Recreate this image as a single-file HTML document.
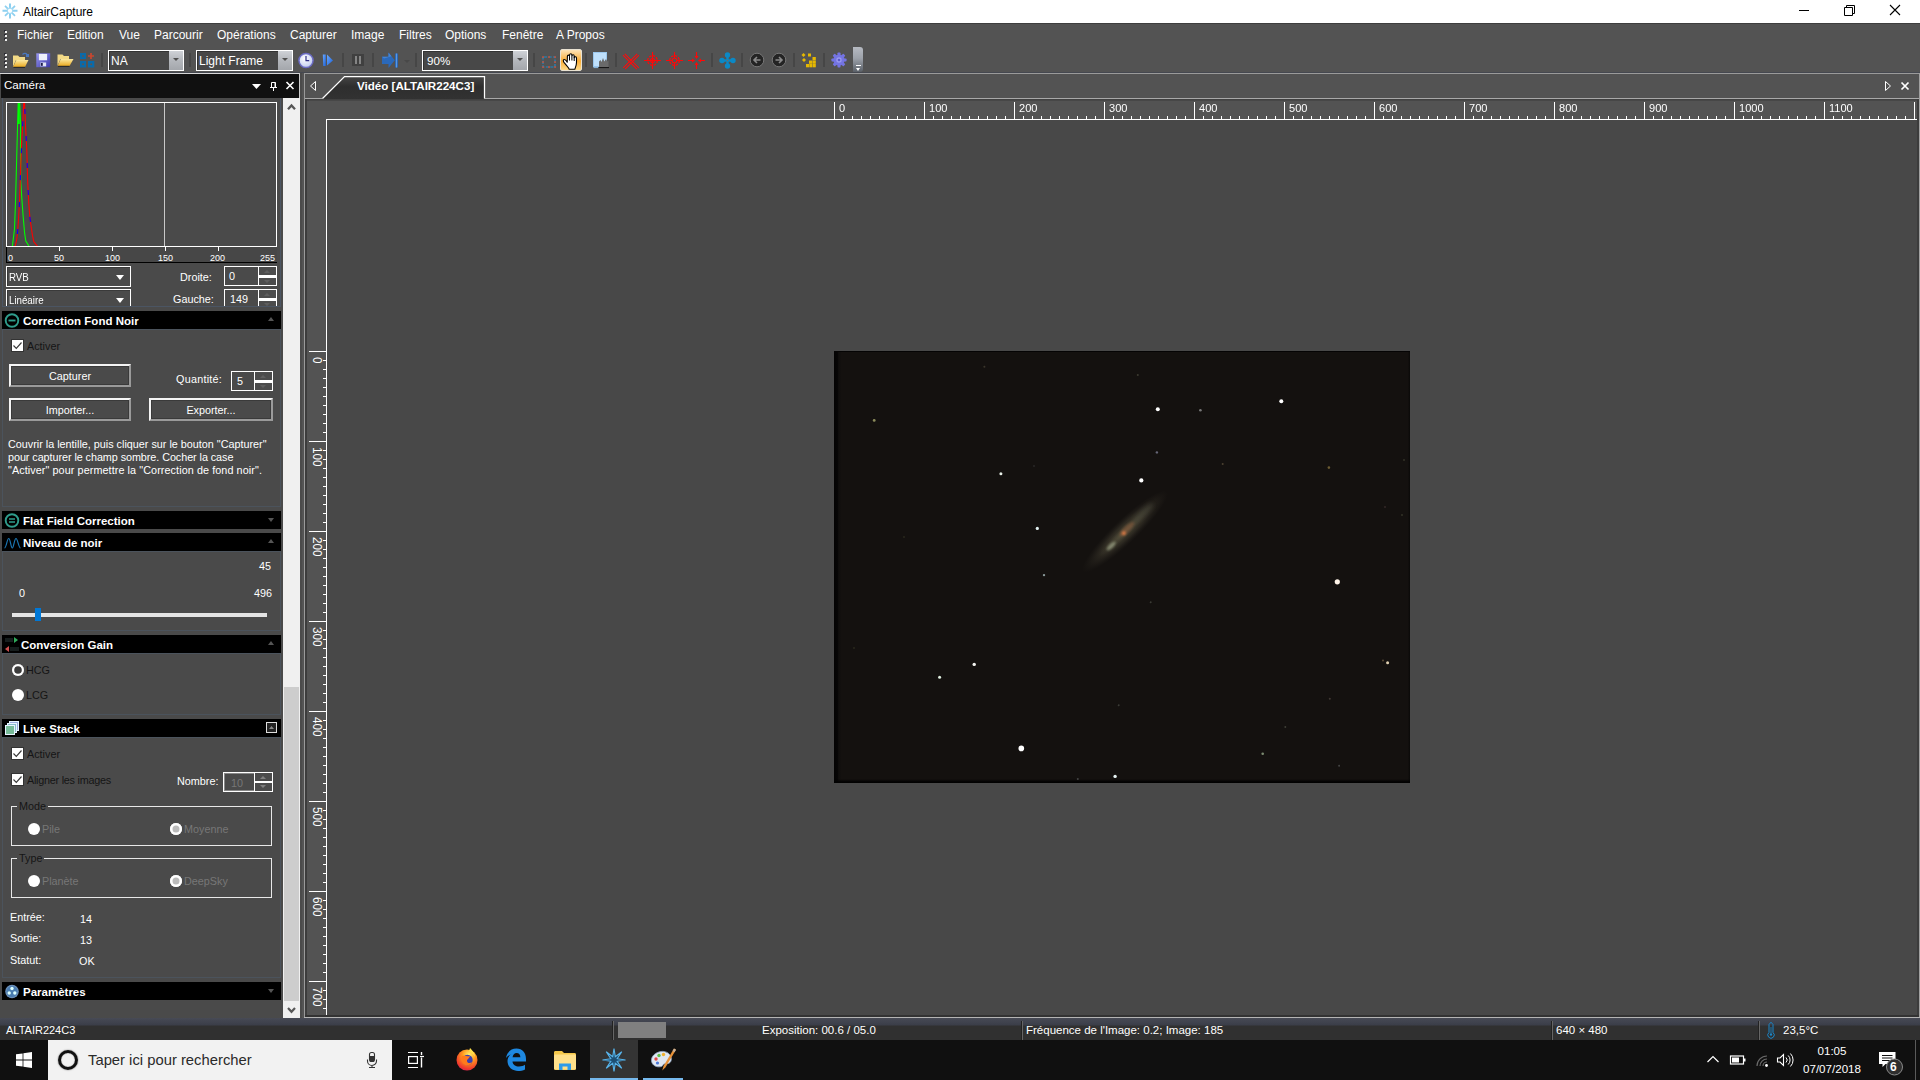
<!DOCTYPE html>
<html lang="fr">
<head>
<meta charset="utf-8">
<title>AltairCapture</title>
<style>
*{box-sizing:border-box;margin:0;padding:0}
html,body{width:1920px;height:1080px;overflow:hidden;background:#535353}
body{font-family:"Liberation Sans",sans-serif;font-size:12px;color:#fff;position:relative}
.a{position:absolute}
.t{position:absolute;white-space:pre;line-height:14px}
/* title bar */
#title{left:0;top:0;width:1920px;height:23px;background:#fff;color:#000}
/* menu + toolbar */
#menubar{left:0;top:23px;width:1920px;height:24px;background:#535353;border-top:1px solid #3e3e3e}
#toolbar{left:0;top:47px;width:1920px;height:26px;background:#535353}
.grip{width:2px;height:2px;background:#f0f0f0;box-shadow:-1px -1px 0 #2c2c34;margin:1px 0 0 0}
.m{top:4px;font-size:12px;color:#fff}
.sep{width:2px;height:14px;background:#464646;top:6px}
.combo{border:1px solid #fff;background:#484848;height:21px;top:3px;box-shadow:inset 1px 1px 0 #333}
.combo .btn{position:absolute;right:0;top:0;bottom:0;width:14px;background:linear-gradient(#cfd2d7,#b4b7bc 50%,#a4a7ac)}
.combo .btn:after{content:"";position:absolute;left:4px;top:7px;border:3px solid transparent;border-top:3px solid #505050;border-bottom:0}
.combo .t{left:2px;top:3px;font-size:12px}
/* left panel */
#left{left:0;top:73px;width:302px;height:945px;background:#4a4a4a}
.hdr{left:2px;width:279px;height:18px;background:#000;font-weight:bold;font-size:11.5px}
.hdr .t{left:21px;top:3px}
.sec{left:2px;width:279px;border:1px solid #4b535c;background:#4a4a4a}
.s{font-size:10.8px;line-height:13px}
.btn3{border:2px solid;border-color:#f4f4f4 #9a9a9a #9a9a9a #f4f4f4;background:#4a4a4a;text-align:center;font-size:10.8px;line-height:21px;height:23px;box-shadow:inset 0 0 0 1px #3a3a3a}
.cb{width:13px;height:13px;background:#fff;border:1px solid #333}
.rad{width:12px;height:12px;margin:.5px;border-radius:50%;background:#fff}
.spin{border:1px solid #fff;background:#4a4a4a;height:20px;overflow:hidden}
.ax{top:252.5px;font-size:9px;line-height:11px;color:#fff}
.lcombo{width:125px;height:21px;border:1px solid #fff;background:#4a4a4a;box-shadow:inset 1px 1px 0 #3a3a3a}
.lcombo .t{left:2px;top:4px;transform-origin:0 0;transform:scaleX(.9)}
.lcombo i{position:absolute;left:109px;top:8px;border:4.5px solid transparent;border-top:5px solid #fff;border-bottom:0}
.spin b{position:absolute;right:0;top:0;width:18px;bottom:0;border-left:1px solid #fff;background:linear-gradient(#4c4c4c 0,#4c4c4c 8px,#fff 8px,#fff 11px,#4c4c4c 11px)}
.spin b:before{content:"";position:absolute;left:5px;top:3px;border:3px solid transparent;border-bottom:3px solid #5e5e5e;border-top:0}
.spin b:after{content:"";position:absolute;left:5px;top:13px;border:3px solid transparent;border-top:3px solid #5e5e5e;border-bottom:0}
.dk{color:#151515}.gy{color:#777}
.hdr u{position:absolute;left:266px;border:3.5px solid transparent}
.hdr u.up{top:6px;border-bottom:4px solid #555;border-top:0}
.hdr u.dn{top:7px;border-top:4px solid #555;border-bottom:0}
.grp{left:11px;width:261px;height:40px;border:1px solid #e8e8e8}
.cb svg{display:block}
.spin b.lt:before{border-bottom-color:#808080}.spin b.lt:after{border-top-color:#808080;top:12px}
/* main */
#main{left:304px;top:74px;width:1616px;height:944px;background:#535353}
.rl{top:102px;font-size:11.5px;line-height:13px;transform-origin:0 0;transform:scaleX(.96)}
.vl{left:323px;font-size:12px;line-height:13px;transform-origin:0 0;transform:rotate(90deg) scaleX(.98)}
/* status */
#status{left:0;top:1018px;width:1920px;height:22px;background:linear-gradient(#474a55 0,#3b3e49 7px,#303030 8px,#303030 100%)}
.st{top:1023px;font-size:11.5px;line-height:14px}
.vs{top:1021px;width:2px;height:19px;background:linear-gradient(90deg,#222 50%,#666 50%)}
#task{left:0;top:1040px;width:1920px;height:40px;background:#101010}
</style>
</head>
<body>
<!-- TITLE BAR -->
<div id="title" class="a">
  <svg class="a" style="left:0;top:0" width="21" height="23" viewBox="0 0 21 23"><g stroke="#8dd0f0" fill="none"><path d="M10 3.500v15M2.500 10.800h15" stroke-width="2"/><path d="M5 5.800l10 10M15 5.800l-10 10" stroke-width="1.700"/></g><circle cx="10" cy="10.800" r="2.700" fill="#fff" stroke="#a6dbf4" stroke-width="1.100"/></svg>
  <span class="t" style="left:23px;top:5px;font-size:12px">AltairCapture</span>
  <svg class="a" style="left:1790px;top:0" width="130" height="23" viewBox="0 0 130 23"><path d="M9 10.500h10" stroke="#000" stroke-width="1"/><path d="M54.500 7.500h8v8h-8zM56.500 7.500v-2h8v8h-2" fill="none" stroke="#000" stroke-width="1"/><path d="M100 5l10 10M110 5l-10 10" stroke="#000" stroke-width="1.100"/></svg>
</div>
<!-- MENU BAR -->
<div id="menubar" class="a">
  <div class="a grip" style="left:5px;top:6px"></div><div class="a grip" style="left:5px;top:10px"></div><div class="a grip" style="left:5px;top:14px"></div>
  <span class="t m" style="left:17px">Fichier</span>
  <span class="t m" style="left:67px">Edition</span>
  <span class="t m" style="left:119px">Vue</span>
  <span class="t m" style="left:154px">Parcourir</span>
  <span class="t m" style="left:217px">Opérations</span>
  <span class="t m" style="left:290px">Capturer</span>
  <span class="t m" style="left:351px">Image</span>
  <span class="t m" style="left:399px">Filtres</span>
  <span class="t m" style="left:445px">Options</span>
  <span class="t m" style="left:502px">Fenêtre</span>
  <span class="t m" style="left:556px">A Propos</span>
</div>
<!-- TOOLBAR -->
<div id="toolbar" class="a">
  <div class="a grip" style="left:5px;top:6px"></div><div class="a grip" style="left:5px;top:10px"></div><div class="a grip" style="left:5px;top:14px"></div><div class="a grip" style="left:5px;top:18px"></div>
  <!-- open folder w/ arrow -->
  <svg class="a ic" style="left:12px;top:5px" width="18" height="17" viewBox="0 0 18 17"><defs><linearGradient id="fo" x1="0" y1="0" x2="0" y2="1"><stop offset="0" stop-color="#fbe9a0"/><stop offset="1" stop-color="#e9a91f"/></linearGradient></defs><path d="M1 3.500h5l1.500 1.500H13v3H4L1 14.500z" fill="#f3da86"/><path d="M4.300 8h12.200L13 15H1z" fill="url(#fo)"/><path d="M1.500 15.300H13" stroke="#222" stroke-width="1"/><path d="M10.500 2.500c1.500-1.500 3.500-1.500 4.500 0" fill="none" stroke="#4a78c0" stroke-width="1.200"/><rect x="14" y="2" width="3" height="3" fill="#4a78c0"/></svg>
  <!-- floppy -->
  <svg class="a ic" style="left:36px;top:6px" width="14.500" height="14.500" viewBox="0 0 15 15"><defs><linearGradient id="fl" x1="0" y1="0" x2="1" y2="1"><stop offset="0" stop-color="#9a98f0"/><stop offset="1" stop-color="#3a38a8"/></linearGradient></defs><rect x=".3" y=".3" width="14.400" height="14.400" fill="url(#fl)"/><rect x="3" y="1" width="8.500" height="6.500" fill="#eef0fa"/><rect x="4.500" y="9.800" width="6" height="4" fill="#dfe3f3"/><rect x="5" y="10.300" width="2" height="3" fill="#1c1c50"/></svg>
  <!-- folder -->
  <svg class="a ic" style="left:57px;top:6px" width="17" height="15" viewBox="0 0 17 15"><path d="M.500 1.500h5l1.500 1.500H12v3H3.500L.500 12.500z" fill="#f3da86"/><path d="M3.800 6h12.700L12.500 13H.500z" fill="url(#fo)"/><path d="M1 13.300H12.500" stroke="#222" stroke-width="1"/></svg>
  <!-- blue squares + plus -->
  <svg class="a ic" style="left:80px;top:6px" width="15" height="15" viewBox="0 0 15 15"><g fill="#0b6aa9"><rect x="0" y="0" width="6" height="6"/><rect x="0" y="8" width="6" height="6.500"/><rect x="8" y="8" width="6.300" height="6.500"/></g><g fill="#70523f"><rect x="2.300" y="2.300" width="1.500" height="1.500"/><rect x="2.300" y="10.500" width="1.500" height="1.500"/><rect x="10.400" y="10.500" width="1.500" height="1.500"/></g><path d="M11 0v6M8 3h6" stroke="#c9472f" stroke-width="1.700"/></svg>
  <div class="a sep" style="left:101px"></div>
  <div class="a combo" style="left:108px;width:76px"><span class="t">NA</span><div class="btn"></div></div>
  <div class="a sep" style="left:189px"></div>
  <div class="a combo" style="left:196px;width:97px"><span class="t">Light Frame</span><div class="btn"></div></div>
  <!-- clock -->
  <svg class="a ic" style="left:297px;top:4px" width="18" height="18" viewBox="0 0 18 18"><defs><radialGradient id="ck" cx=".4" cy=".35" r=".7"><stop offset="0" stop-color="#ffffff"/><stop offset="1" stop-color="#c3cdf0"/></radialGradient></defs><circle cx="9" cy="9.500" r="7.800" fill="#6c6cc4"/><circle cx="9" cy="9.500" r="6.300" fill="url(#ck)"/><path d="M9 5v4.700h3.200" fill="none" stroke="#2e2e86" stroke-width="1.200"/></svg>
  <!-- play step -->
  <svg class="a ic" style="left:322px;top:6px" width="12" height="14" viewBox="0 0 12 14"><defs><linearGradient id="pb" x1="0" y1="0" x2="1" y2="1"><stop offset="0" stop-color="#6aa8ff"/><stop offset="1" stop-color="#1c62d8"/></linearGradient></defs><path d="M.800 1.500h3v11.500h-2.500z" fill="url(#pb)"/><path d="M5 1.500L11 7.500 5 12.500z" fill="url(#pb)"/></svg>
  <div class="a sep" style="left:342px"></div>
  <!-- pause -->
  <div class="a" style="left:352px;top:7px;width:12px;height:12px;background:#404040"></div><div class="a" style="left:355px;top:9px;width:2px;height:8px;background:#858585"></div><div class="a" style="left:359px;top:9px;width:2px;height:8px;background:#858585"></div>
  <div class="a sep" style="left:372px"></div>
  <!-- arrow to bar -->
  <svg class="a ic" style="left:381px;top:5px" width="18" height="17" viewBox="0 0 18 17"><path d="M1 4.800h6.500V.500l6.300 7.800-6.300 7.700V12H1z" fill="#2b69ba"/><path d="M1 4.800h6.500V.500l3 3.800L3 6.500z" fill="#4484d4"/><rect x="14" y="1.500" width="3" height="14" fill="#2b69ba"/><rect x="15" y="1.500" width="1" height="14" fill="#5a98e0"/></svg>
  <div class="a" style="left:404px;top:13px;border:3px solid transparent;border-top:3px solid #484848;border-bottom:0"></div>
  <div class="a sep" style="left:415px"></div>
  <div class="a combo" style="left:422px;width:106px"><span class="t" style="left:4px;font-size:11.600px">90%</span><div class="btn"></div></div>
  <div class="a sep" style="left:533px"></div>
  <!-- dashed rect -->
  <svg class="a ic" style="left:541px;top:8px" width="16" height="14" viewBox="0 0 16 14"><rect x="2" y="2" width="12" height="10" fill="none" stroke="#1a8bcb" stroke-width="1.200" stroke-dasharray="3.200 1.300" stroke-dashoffset="-1"/><g fill="#c6523a"><rect x="1.200" y="1.200" width="1.700" height="1.700"/><rect x="7.200" y="1.200" width="1.700" height="1.700"/><rect x="13.200" y="1.200" width="1.700" height="1.700"/><rect x="1.200" y="6.200" width="1.700" height="1.700"/><rect x="13.200" y="6.200" width="1.700" height="1.700"/><rect x="1.200" y="11.200" width="1.700" height="1.700"/><rect x="7.200" y="11.200" width="1.700" height="1.700"/><rect x="13.200" y="11.200" width="1.700" height="1.700"/></g></svg>
  <!-- hand (active) -->
  <div class="a" style="left:560px;top:2px;width:22px;height:22px;border-radius:2px;border:1px solid #e9e2d2;background:linear-gradient(#fde3b8 0,#fbc064 35%,#fbad35 55%,#fdd988 100%)"></div>
  <svg class="a ic" style="left:562px;top:5px" width="18" height="18" viewBox="0 0 18 18"><path d="M7.200 17.300 C6.300 15.300 4.500 13.300 2.600 11.200 C1.300 9.700 1 8.300 1.700 7.700 C2.600 7 3.800 8 5.200 10.200 L5.400 4.300 C5.400 2.700 7.400 2.700 7.500 4.200 L7.600 3 C7.700 1.300 9.800 1.300 9.900 3 L10 3.800 C10.200 2.300 12.200 2.400 12.200 4 L12.300 5.600 C12.500 4.300 14.500 4.400 14.500 5.900 L14.500 10.500 C14.500 13 13.500 15 12.800 17.300 Z" fill="#fff" stroke="#000" stroke-width="1.100" stroke-linejoin="round"/><path d="M7.500 4.200v4.300M9.900 3.500v5M12.200 4.500v4.500" stroke="#000" stroke-width="1"/></svg>
  <div class="a sep" style="left:585px"></div>
  <!-- histo image -->
  <svg class="a ic" style="left:593px;top:5px" width="17" height="17" viewBox="0 0 17 17"><rect x=".5" y=".5" width="13" height="14" fill="#bfe0fb" stroke="#9cc8ee"/><path d="M.500 15.500h5" stroke="#8ab4d8" stroke-width="1.200"/><path d="M6 15V9.500l1.500-1.500 1 2 1.500-4 1.300 3.500L13 7l1.200 2.500 1.300-1V15z" fill="#6a6a6a"/><path d="M5.500 15.600h10.500" stroke="#111" stroke-width="1"/></svg>
  <div class="a sep" style="left:615px"></div>
  <!-- red X -->
  <svg class="a ic" style="left:622px;top:6px" width="18" height="17" viewBox="0 0 18 17" stroke="#ff0a0a" stroke-width="1.05" fill="none"><path d="M1 2.200l13.800 14M2.800 .800l14 14M17 2.200L3.200 16.200M15.200 .800L1.200 14.800"/></svg>
  <!-- crosshair 1 -->
  <svg class="a ic" style="left:644px;top:5px" width="17" height="17" viewBox="0 0 17 17" fill="none" stroke="#ff0808"><path d="M8.500 0v17M0 8.500h17" stroke-width="1.100"/><circle cx="8.500" cy="8.500" r="4.800" stroke-width="1.300" stroke-dasharray="2.500 1.200"/><circle cx="8.500" cy="8.500" r="2" stroke-width="1.100"/></svg>
  <!-- crosshair 2 -->
  <svg class="a ic" style="left:666px;top:5px" width="17" height="17" viewBox="0 0 17 17" fill="none" stroke="#ff0808"><path d="M8.500 0v6M8.500 11v6M0 8.500h6M11 8.500h6" stroke-width="1.100"/><circle cx="8.500" cy="8.500" r="4.800" stroke-width="1.300" stroke-dasharray="2.500 1.200"/><circle cx="8.500" cy="8.500" r="2.300" stroke-width="1.100"/></svg>
  <!-- arrows in -->
  <svg class="a ic" style="left:688px;top:5px" width="17" height="17" viewBox="0 0 17 17" fill="#ff0808" stroke="#ff0808"><path d="M8.500 0v5M8.500 12v5M0 8.500h5M12 8.500h5" stroke-width="1.100"/><path d="M8.500 7L6.500 4h4zM8.500 10l-2 3h4zM7 8.500L4 6.500v4zM10 8.500l3-2v4z" stroke="none"/></svg>
  <div class="a sep" style="left:711px"></div>
  <!-- blue 4 circles -->
  <svg class="a ic" style="left:719px;top:5px" width="17" height="17" viewBox="0 0 17 17" fill="#0b89c6"><circle cx="8.500" cy="3" r="2.700"/><circle cx="8.500" cy="14" r="2.700"/><circle cx="3" cy="8.500" r="2.700"/><circle cx="14" cy="8.500" r="2.700"/><rect x="7.300" y="3" width="2.400" height="11"/><rect x="3" y="7.300" width="11" height="2.400"/><rect x="7.800" y="7.800" width="1.400" height="1.400" fill="#7a6a5a"/></svg>
  <div class="a sep" style="left:741px"></div>
  <!-- nav circles -->
  <svg class="a ic" style="left:749px;top:5px" width="38" height="16" viewBox="0 0 38 16"><circle cx="8" cy="8" r="6.800" fill="#242424" stroke="#777" stroke-width="1"/><path d="M11.500 8H5.500M8 5L5 8l3 3" fill="none" stroke="#8a8a8a" stroke-width="1.600"/><circle cx="30" cy="8" r="6.800" fill="#242424" stroke="#777" stroke-width="1"/><path d="M26.500 8h6M30 5l3 3-3 3" fill="none" stroke="#8a8a8a" stroke-width="1.600"/></svg>
  <div class="a sep" style="left:793px"></div>
  <!-- gold dots -->
  <svg class="a ic" style="left:800px;top:6px" width="17" height="15" viewBox="0 0 17 15" fill="#e6b800"><path d="M3.500 0l2 2-2 2-2-2zM4 5l2 2-2 2-2-2z"/><rect x="8" y=".5" width="3" height="3"/><rect x="12.500" y="4" width="3.300" height="3.300"/><rect x="9" y="7.500" width="3.300" height="3.300"/><rect x="12.500" y="7.500" width="3.300" height="3.300"/><rect x="6" y="11" width="3" height="3.300"/><rect x="9.300" y="11" width="3" height="3.300"/><rect x="12.600" y="11" width="3.200" height="3.300"/></svg>
  <div class="a sep" style="left:823px"></div>
  <!-- gear -->
  <svg class="a ic" style="left:831px;top:4.500px" width="16" height="16" viewBox="0 0 18 18"><g transform="translate(9 9)"><g fill="#7474e2"><rect x="-1.700" y="-8.500" width="3.400" height="17" rx=".8"/><rect x="-1.700" y="-8.500" width="3.400" height="17" rx=".8" transform="rotate(45)"/><rect x="-1.700" y="-8.500" width="3.400" height="17" rx=".8" transform="rotate(90)"/><rect x="-1.700" y="-8.500" width="3.400" height="17" rx=".8" transform="rotate(135)"/><circle r="6.300"/></g><circle r="3" fill="#9a9af0"/><circle r="1.500" fill="#5a5ac8"/></g></svg>
  <!-- overflow -->
  <div class="a" style="left:853px;top:0;width:10px;height:25px;border-radius:0 3px 3px 0;background:linear-gradient(#b6bac2,#9da2aa 45%,#5a6068 100%)"></div>
  <div class="a" style="left:856px;top:18px;width:5px;height:1px;background:#fff"></div>
  <div class="a" style="left:856px;top:21px;border:2.500px solid transparent;border-top:3px solid #fff;border-bottom:0"></div>
</div>
<!-- LEFT PANEL -->
<div id="left" class="a"></div>
<div class="a" style="left:0;top:72px;width:1920px;height:1px;background:#454850"></div>
<div class="a" style="left:0;top:73px;width:300px;height:1px;background:#d8d8d8"></div>
<div class="a" style="left:1px;top:74px;width:298px;height:24px;background:#101010"></div>
<div class="a" style="left:299px;top:73px;width:1px;height:25px;background:#cfcfcf"></div>
<span class="t" style="left:4px;top:78px;font-size:11.600px">Caméra</span>
<svg class="a" style="left:250px;top:80px" width="48" height="12" viewBox="0 0 48 12">
  <path d="M2 4h9l-4.5 5z" fill="#fff"/>
  <path d="M21.5 2.5h4v5h-4zM25 2.5v5M20 7.5h7M23.5 8v3" stroke="#fff" stroke-width="1" fill="none"/>
  <path d="M36.5 2l7 7M43.5 2l-7 7" stroke="#fff" stroke-width="1.6" fill="none"/>
</svg>
<!-- histogram pane -->
<div class="a" style="left:2px;top:98px;width:279px;height:209px;background:#4a4a4a;border-right:1px solid #4b5563;border-bottom:1px solid #4b5563;border-left:1px solid #4b5563;overflow:hidden">
</div>
<div class="a" style="left:6px;top:102px;width:271px;height:145px;border:1px solid #fff;background:#4a4a4a"></div>
<div class="a" style="left:164px;top:103px;width:1px;height:143px;background:#c8c8c8"></div>
<svg class="a" style="left:7px;top:103px" width="40" height="143" viewBox="0 0 40 143" fill="none" stroke-width="1.100">
  <path d="M5.400 143 L7.500 126 L8.500 99 L9.500 62.600 L10.600 21 L11.200 0 M12.700 0 L13.600 21 L13.700 78 L14.800 95 L16.200 114 L17.600 130 L18.800 138 L21.900 143" stroke="#00ff00"/>
  <path d="M11.900 0V21" stroke="#00ff00" stroke-width="1.800"/>
  <path d="M8.200 143 L9.600 137 L10.600 129 L11.600 115 L12.700 95 L13.700 64 L14.800 36 L15.800 20 L16.700 0 M17.600 0 L18.600 24.600 L19.800 47 L20.700 79.500 L21.900 102 L22.900 114.700 L24.300 124.600 L25.400 132 L26.800 138.700 L30.300 143" stroke="#ff0000"/>
  <path d="M9.600 137 L10.600 129 L11.600 115 L12.700 95 L13.700 64 L14.800 36 L15.800 20 L16.700 0 M17.600 0 L18.600 24.600 L19.800 47 L20.700 79.500 L21.900 102 L22.900 114.700 L24.300 124.600 L25.400 132 L26.800 138.700" stroke="#0000ff" stroke-dasharray="5 22" stroke-dashoffset="-6"/>
</svg>
<div class="a" style="left:6px;top:247px;width:271px;height:16px;background:#474747;border-left:1px solid #000;border-bottom:1px solid #000"></div>
<div class="a" style="left:59px;top:247px;width:1px;height:4px;background:#fff"></div>
<div class="a" style="left:112px;top:247px;width:1px;height:4px;background:#fff"></div>
<div class="a" style="left:165px;top:247px;width:1px;height:4px;background:#fff"></div>
<div class="a" style="left:218px;top:247px;width:1px;height:4px;background:#fff"></div>
<span class="t ax" style="left:8px">0</span>
<span class="t ax" style="left:54px">50</span>
<span class="t ax" style="left:105px">100</span>
<span class="t ax" style="left:158px">150</span>
<span class="t ax" style="left:210px">200</span>
<span class="t ax" style="left:260px">255</span>
<div class="a lcombo" style="left:6px;top:266px"><span class="t s">RVB</span><i></i></div>
<div class="a lcombo" style="left:6px;top:289px;height:17px;border-bottom:0"><span class="t s">Linéaire</span><i></i></div>
<span class="t s" style="left:180px;top:271px">Droite:</span>
<span class="t s" style="left:173px;top:293px">Gauche:</span>
<div class="a spin" style="left:224px;top:266px;width:53px"><span class="t s" style="left:4px;top:3px">0</span><b></b></div>
<div class="a spin" style="left:224px;top:289px;width:53px;height:17px;border-bottom:0"><span class="t s" style="left:5px;top:3px">149</span><b></b></div>
<!-- /LEFTTOP -->
<!-- Correction Fond Noir -->
<div class="a hdr" style="top:311px"><svg class="a" style="left:2px;top:1px" width="16" height="16" viewBox="0 0 16 16"><circle cx="8" cy="8.5" r="6.3" fill="none" stroke="#2f9c8c" stroke-width="1.9"/><path d="M4.5 8.5h7" stroke="#2f9c8c" stroke-width="1.9"/></svg><span class="t">Correction Fond Noir</span><u class="up"></u></div>
<div class="a sec" style="top:329px;height:178px"></div>
<div class="a cb" style="left:11px;top:339px"><svg width="11" height="11" viewBox="0 0 11 11"><path d="M1.5 5.5l2.8 2.8L9.5 2.5" fill="none" stroke="#3a3a3a" stroke-width="1.15"/></svg></div>
<span class="t s dk" style="left:27px;top:340px">Activer</span>
<div class="a btn3" style="left:9px;top:364px;width:122px">Capturer</div>
<span class="t s" style="left:176px;top:373px;letter-spacing:.25px">Quantité:</span>
<div class="a spin" style="left:231px;top:371px;width:42px"><span class="t s" style="left:5px;top:3px">5</span><b></b></div>
<div class="a btn3" style="left:9px;top:398px;width:122px">Importer...</div>
<div class="a btn3" style="left:149px;top:398px;width:124px">Exporter...</div>
<span class="t s" style="left:8px;top:438px">Couvrir la lentille, puis cliquer sur le bouton "Capturer"</span>
<span class="t s" style="left:8px;top:451px;letter-spacing:-.06px">pour capturer le champ sombre. Cocher la case</span>
<span class="t s" style="left:8px;top:464px;letter-spacing:.085px">"Activer" pour permettre la "Correction de fond noir".</span>
<!-- Flat Field -->
<div class="a hdr" style="top:511px"><svg class="a" style="left:2px;top:1px" width="16" height="16" viewBox="0 0 16 16"><circle cx="8" cy="8.5" r="6.3" fill="none" stroke="#2f9c8c" stroke-width="1.9"/><path d="M5 7h6M5 10h6" stroke="#2f9c8c" stroke-width="1.5"/></svg><span class="t">Flat Field Correction</span><u class="dn"></u></div>
<!-- Niveau de noir -->
<div class="a hdr" style="top:533px"><svg class="a" style="left:2px;top:1px" width="18" height="16" viewBox="0 0 18 16"><path d="M.500 14 C2.500 14 3 4.500 4.700 4.500 S6.800 14 8.300 14 S10.300 4.500 12 4.500 S14.500 14 16.500 14" fill="none" stroke="#1b76b2" stroke-width="1.200"/></svg><span class="t">Niveau de noir</span><u class="up"></u></div>
<div class="a sec" style="top:551px;height:80px"></div>
<span class="t s" style="left:259px;top:560px">45</span>
<span class="t s" style="left:19px;top:587px">0</span>
<span class="t s" style="left:254px;top:587px">496</span>
<div class="a" style="left:12px;top:613px;width:255px;height:4px;background:#e4e4e4"></div>
<div class="a" style="left:35px;top:608px;width:6px;height:13px;background:#0078d7"></div>
<!-- Conversion Gain -->
<div class="a hdr" style="top:635px"><svg class="a" style="left:2px;top:1px" width="16" height="16" viewBox="0 0 16 16"><path d="M1 3h8M1 5h8M6 12h9M6 14h9" stroke="#2c3a3a" stroke-width="1"/><path d="M10 1l4 3-4 3z" fill="#2faa5a"/><path d="M5 10l-4 3 4 3z" fill="#d05050"/></svg><span class="t" style="left:19px">Conversion Gain</span><u class="up"></u></div>
<div class="a sec" style="top:653px;height:62px"></div>
<div class="a rad" style="left:11px;top:663px;box-shadow:inset 0 0 0 2.2px #fff,inset 0 0 0 7px #3c3c3c"></div>
<span class="t s dk" style="left:26px;top:664px">HCG</span>
<div class="a rad" style="left:11px;top:688px"></div>
<span class="t s dk" style="left:26px;top:689px">LCG</span>
<!-- Live Stack -->
<div class="a hdr" style="top:719px"><svg class="a" style="left:2px;top:1px" width="16" height="16" viewBox="0 0 16 16"><rect x="5.5" y="1.5" width="9" height="9" fill="#9ad" stroke="#e8f4ff"/><rect x="3.5" y="3.5" width="9" height="9" fill="#8bc" stroke="#e8f4ff"/><rect x="1.5" y="5.5" width="9" height="9" fill="#7b9" stroke="#e8f4ff"/></svg><span class="t">Live Stack</span><svg class="a" style="left:264px;top:3px" width="11" height="11" viewBox="0 0 11 11"><rect x=".5" y=".5" width="10" height="10" fill="#222" stroke="#ddd"/><path d="M3 7l2.5-3L8 7z" fill="#888"/></svg></div>
<div class="a sec" style="top:737px;height:241px"></div>
<div class="a cb" style="left:11px;top:747px"><svg width="11" height="11" viewBox="0 0 11 11"><path d="M1.5 5.5l2.8 2.8L9.5 2.5" fill="none" stroke="#3a3a3a" stroke-width="1.15"/></svg></div>
<span class="t s dk" style="left:27px;top:748px">Activer</span>
<div class="a cb" style="left:11px;top:773px"><svg width="11" height="11" viewBox="0 0 11 11"><path d="M1.5 5.5l2.8 2.8L9.5 2.5" fill="none" stroke="#3a3a3a" stroke-width="1.15"/></svg></div>
<span class="t s dk" style="left:27px;top:774px;letter-spacing:-.24px">Aligner les images</span>
<span class="t s" style="left:177px;top:775px">Nombre:</span>
<div class="a spin" style="left:223px;top:772px;width:50px;box-shadow:inset 0 0 0 1px #888"><span class="t s" style="left:7px;top:4px;color:#777">10</span><b style="background:linear-gradient(#4c4c4c 0,#4c4c4c 8px,#fff 8px,#fff 10px,#4c4c4c 10px)" class="lt"></b></div>
<div class="a grp" style="top:806px"></div>
<span class="t s dk" style="left:17px;top:800px;background:#4a4a4a;padding:0 2px">Mode</span>
<div class="a rad" style="left:27px;top:822px"></div><span class="t s gy" style="left:42px;top:823px">Pile</span>
<div class="a rad" style="left:169px;top:822px;box-shadow:inset 0 0 0 2.5px #fff,inset 0 0 0 7px #bbb"></div><span class="t s gy" style="left:184px;top:823px">Moyenne</span>
<div class="a grp" style="top:858px"></div>
<span class="t s dk" style="left:17px;top:852px;background:#4a4a4a;padding:0 2px">Type</span>
<div class="a rad" style="left:27px;top:874px"></div><span class="t s gy" style="left:42px;top:875px">Planète</span>
<div class="a rad" style="left:169px;top:874px;box-shadow:inset 0 0 0 2.5px #fff,inset 0 0 0 7px #bbb"></div><span class="t s gy" style="left:184px;top:875px">DeepSky</span>
<span class="t s" style="left:10px;top:911px">Entrée:</span><span class="t s" style="left:80px;top:913px">14</span>
<span class="t s" style="left:10px;top:932px">Sortie:</span><span class="t s" style="left:80px;top:934px">13</span>
<span class="t s" style="left:10px;top:954px">Statut:</span><span class="t s" style="left:79px;top:955px">OK</span>
<!-- Paramètres -->
<div class="a hdr" style="top:982px"><svg class="a" style="left:2px;top:1px" width="16" height="16" viewBox="0 0 16 16"><circle cx="8" cy="8.5" r="6.8" fill="#6b8fb8"/><circle cx="8" cy="8.5" r="5.5" fill="#4a7cb0"/><circle cx="8" cy="5.5" r="1.7" fill="#dff"/><circle cx="5.2" cy="10" r="1.7" fill="#dff"/><circle cx="10.8" cy="10" r="1.7" fill="#dff"/></svg><span class="t">Paramètres</span><u class="dn"></u></div>
<!-- scrollbar -->
<div class="a" style="left:283px;top:98px;width:17px;height:920px;background:#f0f0f0"></div>
<div class="a" style="left:284px;top:687px;width:15px;height:314px;background:#cdcdcd"></div>
<svg class="a" style="left:283px;top:98px" width="17" height="17" viewBox="0 0 17 17"><path d="M5 11.300l3.500-3.800 3.500 3.800" fill="none" stroke="#555" stroke-width="2.300"/></svg>
<svg class="a" style="left:283px;top:1001px" width="17" height="17" viewBox="0 0 17 17"><path d="M5 7l3.500 3.800 3.500-3.800" fill="none" stroke="#585858" stroke-width="2.200"/></svg>
<!-- /LEFT -->
<!-- MAIN -->
<div id="main" class="a"></div>
<div class="a" style="left:304px;top:73px;width:1616px;height:1px;background:#9a9a9a"></div>
<div class="a" style="left:304px;top:73px;width:1px;height:945px;background:#9a9a9a"></div>
<div class="a" style="left:305px;top:99px;width:2px;height:918px;background:#3c3c3c"></div>
<div class="a" style="left:1919px;top:73px;width:1px;height:945px;background:#a0a0a0"></div>
<div class="a" style="left:1917px;top:99px;width:2px;height:918px;background:#3c3c3c"></div>
<div class="a" style="left:305px;top:98px;width:1614px;height:1px;background:#a8a8a8"></div>
<div class="a" style="left:307px;top:99px;width:1610px;height:2px;background:linear-gradient(#3e3e3e,#4a4a4a)"></div>
<svg class="a" style="left:305px;top:74px" width="200" height="26" viewBox="0 0 200 26">
  <defs><linearGradient id="tg" x1="0" y1="0" x2="0" y2="1"><stop offset="0" stop-color="#444"/><stop offset=".45" stop-color="#2e2e2e"/><stop offset="1" stop-color="#323232"/></linearGradient></defs>
  <path d="M17 25 L39.5 2.5 L179.5 2.5 L179.5 25 Z" fill="url(#tg)"/>
  <path d="M17.500 24.500 L39.500 2.500 L179.500 2.500 L179.500 24.500" fill="none" stroke="#fff" stroke-width="1.250"/>
  <path d="M10.5 7.5 L10.5 16.5 L5.5 12 Z" fill="none" stroke="#fff" stroke-width="1"/>
</svg>
<span class="t" style="left:357px;top:79px;font-weight:bold;font-size:11.6px">Vidéo [ALTAIR224C3]</span>
<svg class="a" style="left:1881px;top:80px" width="32" height="12" viewBox="0 0 32 12"><path d="M4.5 1.5v9l5-4.5z" fill="none" stroke="#fff"/><path d="M20.500 2.500l7 7M27.500 2.500l-7 7" stroke="#fff" stroke-width="1.700"/></svg>
<!-- view -->
<div class="a" style="left:326px;top:119px;width:1591px;height:896px;background:#484848;border-left:1px solid #fff;border-top:1px solid #fff"></div>
<div class="a" style="left:305px;top:1015px;width:1614px;height:2px;background:#333"></div>
<div class="a" style="left:304px;top:1017px;width:1616px;height:1px;background:#b4b4b4"></div>
<!-- h ruler -->
<div class="a" style="left:834px;top:116px;width:1080px;height:3px;background:repeating-linear-gradient(90deg,#fff 0,#fff 1px,transparent 1px,transparent 9px)"></div>
<div class="a" style="left:834px;top:102px;width:1081px;height:17px;background:repeating-linear-gradient(90deg,#fff 0,#fff 1px,transparent 1px,transparent 90px)"></div>
<span class="t rl" style="left:839px">0</span><span class="t rl" style="left:929px">100</span><span class="t rl" style="left:1019px">200</span><span class="t rl" style="left:1109px">300</span><span class="t rl" style="left:1199px">400</span><span class="t rl" style="left:1289px">500</span><span class="t rl" style="left:1379px">600</span><span class="t rl" style="left:1469px">700</span><span class="t rl" style="left:1559px">800</span><span class="t rl" style="left:1649px">900</span><span class="t rl" style="left:1739px">1000</span><span class="t rl" style="left:1829px">1100</span>
<!-- v ruler -->
<div class="a" style="left:323px;top:351px;width:3px;height:664px;background:repeating-linear-gradient(180deg,#fff 0,#fff 1px,transparent 1px,transparent 9px)"></div>
<div class="a" style="left:309px;top:351px;width:17px;height:664px;background:repeating-linear-gradient(180deg,#fff 0,#fff 1px,transparent 1px,transparent 90px)"></div>
<span class="t vl" style="top:357px">0</span><span class="t vl" style="top:447px">100</span><span class="t vl" style="top:537px">200</span><span class="t vl" style="top:627px">300</span><span class="t vl" style="top:717px">400</span><span class="t vl" style="top:807px">500</span><span class="t vl" style="top:897px">600</span><span class="t vl" style="top:987px">700</span>
<!-- image -->
<svg class="a" style="left:834px;top:351px" width="576" height="432" viewBox="0 0 576 432">
  <defs>
    <filter id="bl" x="-50%" y="-50%" width="200%" height="200%"><feGaussianBlur stdDeviation="0.75"/></filter>
    <filter id="gb" x="-50%" y="-150%" width="200%" height="400%"><feGaussianBlur stdDeviation="3.5"/></filter><filter id="gb2" x="-50%" y="-150%" width="200%" height="400%"><feGaussianBlur stdDeviation="2"/></filter><filter id="gb1" x="-50%" y="-150%" width="200%" height="400%"><feGaussianBlur stdDeviation="1"/></filter>
    <radialGradient id="g1"><stop offset="0" stop-color="#4e4a38" stop-opacity=".95"/><stop offset=".55" stop-color="#3c382c" stop-opacity=".6"/><stop offset="1" stop-color="#2a2620" stop-opacity="0"/></radialGradient><radialGradient id="g2"><stop offset="0" stop-color="#5a5440" stop-opacity=".8"/><stop offset=".6" stop-color="#4a4636" stop-opacity=".4"/><stop offset="1" stop-color="#3a362a" stop-opacity="0"/></radialGradient><linearGradient id="vb" x1="0" x2="0" y1="0" y2="1"><stop offset="0" stop-color="#000" stop-opacity="0"/><stop offset=".6" stop-color="#000" stop-opacity=".8"/><stop offset="1" stop-color="#000"/></linearGradient><linearGradient id="ve" x1="0" x2="1" y1="0" y2="0"><stop offset="0" stop-color="#040303"/><stop offset=".006" stop-color="#060505"/><stop offset=".008" stop-color="#0f0d0c"/><stop offset=".013" stop-color="#14110f"/><stop offset=".996" stop-color="#14110f"/><stop offset="1" stop-color="#0a0908"/></linearGradient>
  </defs>
  <rect width="576" height="432" fill="url(#ve)"/><rect width="576" height="1" fill="#050404"/><rect y="428" width="576" height="4" fill="url(#vb)"/>
  <g transform="translate(291,180.5) rotate(-43.6)">
    <ellipse rx="58" ry="12" fill="url(#g1)"/>
    <ellipse rx="36" ry="5.5" fill="url(#g2)"/>
    <ellipse cx="3" cy="-.5" rx="10" ry="3" fill="#8a5a3a" filter="url(#gb1)" opacity=".55"/>
    <circle cx="-2" cy=".5" r="2" fill="#e07c44" filter="url(#gb1)"/>
    <ellipse cx="-20" cy="1" rx="6" ry="2.2" fill="#93987e" filter="url(#gb1)" opacity=".8"/>
    <ellipse cx="26" cy="-1" rx="13" ry="2.5" fill="#4a4a3c" filter="url(#gb2)" opacity=".6"/>
  </g>
  <g filter="url(#bl)"><circle cx="40.2" cy="69.4" r="1.4" fill="#8a8a5a"/><circle cx="150.4" cy="15.7" r="1" fill="#3a362c"/><circle cx="303.8" cy="24.1" r="1" fill="#3c3a30"/><circle cx="323.8" cy="58.3" r="2" fill="#ffffff"/><circle cx="366.4" cy="59.2" r="1.3" fill="#777"/><circle cx="447.3" cy="50.3" r="2" fill="#ffffff"/><circle cx="322.9" cy="101.4" r="1.2" fill="#667"/><circle cx="388.7" cy="113.0" r="1" fill="#4a4030"/><circle cx="494.9" cy="116.6" r="1.3" fill="#6a5a30"/><circle cx="166.9" cy="122.8" r="1.5" fill="#e8f0e8"/><circle cx="307.3" cy="129.4" r="2.1" fill="#ffffff"/><circle cx="203.3" cy="177.4" r="1.6" fill="#e0f0f0"/><circle cx="210.0" cy="224.1" r="1.2" fill="#8a9a9a"/><circle cx="503.3" cy="230.8" r="2.6" fill="#fff4e8"/><circle cx="316.7" cy="251.2" r="1" fill="#3a3a34"/><circle cx="140.2" cy="313.4" r="1.7" fill="#f4f4f0"/><circle cx="105.6" cy="326.3" r="1.5" fill="#e0f0e0"/><circle cx="553.6" cy="311.7" r="1.5" fill="#e0d0b0"/><circle cx="549.0" cy="309.5" r="1" fill="#5a4a34"/><circle cx="187.3" cy="397.4" r="2.8" fill="#ffffff"/><circle cx="281.1" cy="425.4" r="1.7" fill="#e8f4f4"/><circle cx="428.7" cy="402.8" r="1.3" fill="#7a8a70"/><circle cx="505.1" cy="414.8" r="1" fill="#444"/><circle cx="243.8" cy="428.1" r="1" fill="#444"/><circle cx="451.3" cy="376.1" r="1" fill="#3c3c36"/><circle cx="495.8" cy="347.7" r="1" fill="#403a34"/><circle cx="284.7" cy="354.3" r="1" fill="#3a3a36"/><circle cx="200.0" cy="115.0" r="0.8" fill="#333"/><circle cx="70.0" cy="186.0" r="0.8" fill="#332"/><circle cx="20.0" cy="297.0" r="0.8" fill="#332"/><circle cx="568.0" cy="164.0" r="0.8" fill="#443"/><circle cx="551.0" cy="156.0" r="0.8" fill="#433"/><circle cx="570.0" cy="109.0" r="0.8" fill="#443"/></g>
</svg>
<!-- /MAIN -->
<!-- STATUS BAR -->
<div id="status" class="a"></div>
<span class="t st" style="left:6px;font-size:11px">ALTAIR224C3</span>
<div class="a vs" style="left:612px"></div>
<div class="a" style="left:618px;top:1022px;width:48px;height:16px;background:#808080"></div>
<span class="t st" style="left:762px">Exposition: 00.6 / 05.0</span>
<div class="a vs" style="left:1021px"></div>
<span class="t st" style="left:1026px">Fréquence de l'Image: 0.2; Image: 185</span>
<div class="a vs" style="left:1551px"></div>
<span class="t st" style="left:1556px">640 × 480</span>
<div class="a vs" style="left:1758px"></div>
<svg class="a" style="left:1765px;top:1021px" width="12" height="18" viewBox="0 0 12 18"><path d="M6 1.2 L8 3.5 V11.5 A3.2 3.2 0 1 1 4 11.5 V3.5 Z" fill="none" stroke="#1b86c8" stroke-width="1"/><path d="M6 6v7" stroke="#1b86c8" stroke-width=".800"/><circle cx="6" cy="13.600" r="1.200" fill="#1b86c8"/></svg>
<span class="t st" style="left:1783px">23,5°C</span>
<!-- TASKBAR -->
<div id="task" class="a"></div>
<svg class="a" style="left:16px;top:1052px" width="16" height="16" viewBox="0 0 16 16"><path d="M0 2.3 L6.6 1.4 V7.6 H0Z M7.4 1.3 L16 0 V7.6 H7.4Z M0 8.4 H6.6 V14.6 L0 13.7Z M7.4 8.4 H16 V16 L7.4 14.7Z" fill="#fff"/></svg>
<div class="a" style="left:48px;top:1040px;width:344px;height:40px;background:#f2f2f2"></div>
<div class="a" style="left:58px;top:1050px;width:20px;height:20px;border-radius:50%;border:3px solid #111;box-shadow:0 0 1.5px #555,inset 0 0 1px #555"></div>
<span class="t" style="left:88px;top:1051px;font-size:14.8px;line-height:18px;color:#2a2a2a">Taper ici pour rechercher</span>
<svg class="a" style="left:364px;top:1051px" width="16" height="18" viewBox="0 0 16 18"><rect x="5.5" y="1.5" width="5" height="9" rx="2" fill="none" stroke="#333" stroke-width="1.1"/><rect x="6" y="5" width="4" height="5" fill="#333"/><path d="M3.5 8.5v1.5a4.5 4.5 0 0 0 9 0V8.5M8 14.5v2M5 16.5h6" fill="none" stroke="#333" stroke-width="1.1"/></svg>
<svg class="a" style="left:407px;top:1051px" width="18" height="18" viewBox="0 0 18 18"><path d="M1 1.5h10M1 16.5h10" stroke="#fff" stroke-width="1.2"/><rect x="1.6" y="5.6" width="8.8" height="6.8" fill="none" stroke="#fff" stroke-width="1.2"/><path d="M14.5 1v3M14.5 6.5v10" stroke="#fff" stroke-width="1.4"/><path d="M13 5.5h4" stroke="#fff" stroke-width="1.2"/></svg>
<!-- firefox -->
<svg class="a" style="left:455px;top:1047px" width="24" height="24" viewBox="0 0 24 24"><defs><radialGradient id="ff" cx=".6" cy=".25" r=".9"><stop offset="0" stop-color="#fff36b"/><stop offset=".35" stop-color="#ff9a1e"/><stop offset=".75" stop-color="#f0382c"/><stop offset="1" stop-color="#c8127a"/></radialGradient></defs><circle cx="12" cy="13" r="10.5" fill="url(#ff)"/><path d="M15 1c2 2 5 5 5 9-1-3-4-4-6-6z" fill="#ffe14a"/><circle cx="12.5" cy="13" r="5.2" fill="#3a3fb0"/><path d="M7 9c3-1 5 1 8 0-1 3-3 3-3 5s3 3 5 1c-1 4-8 5-10 0-1-2-1-4 0-6z" fill="#ff7a1c"/></svg>
<!-- edge -->
<svg class="a" style="left:505px;top:1048px" width="22" height="23" viewBox="0 0 22 23"><path d="M1 10C2 4 6 0.5 11.5 0.5 17.5 0.5 21 5 21 11v2.5H7.5c.3 3.5 3 5 6.500 5 2.500 0 4.500-.8 6-1.700v4.600c-2 1.100-4.500 1.600-7 1.600C6.500 22.500 2.500 18.500 2.500 13c0-3 1.500-5.500 4-7C4 7 2 8.500 1 10zM7.600 9.300h7.800C15.300 6.500 13.800 5 11.600 5 9.400 5 7.900 6.700 7.600 9.300z" fill="#1e88e0"/></svg>
<!-- explorer -->
<svg class="a" style="left:553px;top:1050px" width="24" height="20" viewBox="0 0 24 20"><path d="M1 2.500C1 1.700 1.600 1 2.400 1H9l2 2h10.600c.8 0 1.400.6 1.400 1.400V18.600c0 .8-.6 1.400-1.400 1.400H2.400C1.600 20 1 19.400 1 18.600z" fill="#f5c84a"/><rect x="1" y="4.500" width="22" height="15" rx="1" fill="#ffe08a"/><path d="M6 20v-6.500h12V20h-3.500v-3.500h-5V20z" fill="#2f9be8"/></svg>
<!-- altair active -->
<div class="a" style="left:590px;top:1040px;width:48px;height:40px;background:#343434"></div>
<div class="a" style="left:590px;top:1078px;width:48px;height:2px;background:#76b9ed"></div>
<svg class="a" style="left:602px;top:1048px" width="24" height="24" viewBox="0 0 24 24"><path d="M12 0.500 L13.300 8.800 L19.800 3.800 L15.200 10.700 L23.500 12 L15.200 13.300 L19.800 20.200 L13.300 15.200 L12 23.500 L10.700 15.200 L4.200 20.200 L8.800 13.300 L0.500 12 L8.800 10.700 L4.200 3.800 L10.700 8.800Z" fill="#1d4f73" stroke="#58b4ea" stroke-width="1.100"/></svg>
<!-- paint -->
<div class="a" style="left:643px;top:1078px;width:40px;height:2px;background:#76b9ed"></div>
<svg class="a" style="left:650px;top:1047px" width="28" height="26" viewBox="0 0 28 26"><path d="M11 4.500C5 5.500 1 9.500 1.500 14c.5 4.500 5.500 6.800 10 5.500 1.500-.5 1.200-2 2.500-2.500 2-.8 4 .5 6-1.500 2.500-2.500 1.500-7-2-9.500C16 4.700 13.500 4.100 11 4.500z" fill="#dfe7f2" stroke="#8fa6c4" stroke-width=".8"/><circle cx="6" cy="12" r="1.700" fill="#e04848"/><circle cx="9" cy="8.500" r="1.700" fill="#5fc04a"/><circle cx="13.500" cy="7.500" r="1.700" fill="#f0b030"/><circle cx="7.500" cy="16" r="1.600" fill="#4a78d8"/><path d="M24 1.500L13.500 19l-1.200 4.500 3.200-3.200L26 2.800z" fill="#e69138"/><path d="M24 1.500l2 1.300-1.500 2.500-2-1.300z" fill="#c9b29a"/></svg>
<!-- tray -->
<svg class="a" style="left:1704px;top:1050px" width="96" height="20" viewBox="0 0 96 20"><path d="M3.500 12 L9 6.500 L14.500 12" fill="none" stroke="#fff" stroke-width="1.200"/><rect x="26.500" y="6" width="13" height="8" fill="none" stroke="#fff" stroke-width="1.200"/><rect x="28" y="7.500" width="7" height="5" fill="#fff"/><rect x="40" y="8.500" width="1.500" height="3" fill="#fff"/><g fill="none" stroke="#6a6a6a" stroke-width="1.200"><path d="M53 16 A10 10 0 0 1 63 6"/><path d="M56 16 A7 7 0 0 1 63 9"/><path d="M59 16 A4 4 0 0 1 63 12"/></g><circle cx="62.500" cy="15.500" r="1.400" fill="#fff"/><path d="M73.500 8h2.500l3.500-3.500v11L76 12h-2.500z" fill="none" stroke="#fff" stroke-width="1.100"/><g fill="none" stroke="#fff" stroke-width="1"><path d="M82 7.500a3.500 3.500 0 0 1 0 5"/><path d="M84.200 5.500a6.300 6.300 0 0 1 0 9"/><path d="M86.400 3.500a9.200 9.200 0 0 1 0 13"/></g></svg>
<span class="t" style="left:1801px;top:1044px;width:62px;text-align:center;font-size:11.6px">01:05</span>
<span class="t" style="left:1801px;top:1062px;width:62px;text-align:center;font-size:11.6px">07/07/2018</span>
<svg class="a" style="left:1878px;top:1050px" width="28" height="28" viewBox="0 0 28 28"><path d="M1 2h16.500v12H7.500L4.500 17V14H1z" fill="#fff"/><path d="M4 5.500h10.500M4 8h10.500M4 10.500h10.500" stroke="#101010" stroke-width="1"/><circle cx="16.500" cy="17" r="8" fill="#2e2e2e" stroke="#8a8a8a" stroke-width="1"/></svg>
<span class="t" style="left:1890px;top:1060px;font-size:12px;font-weight:bold">6</span>
<div class="a" style="left:1915px;top:1040px;width:1px;height:40px;background:#5a5a5a"></div>
</body>
</html>
